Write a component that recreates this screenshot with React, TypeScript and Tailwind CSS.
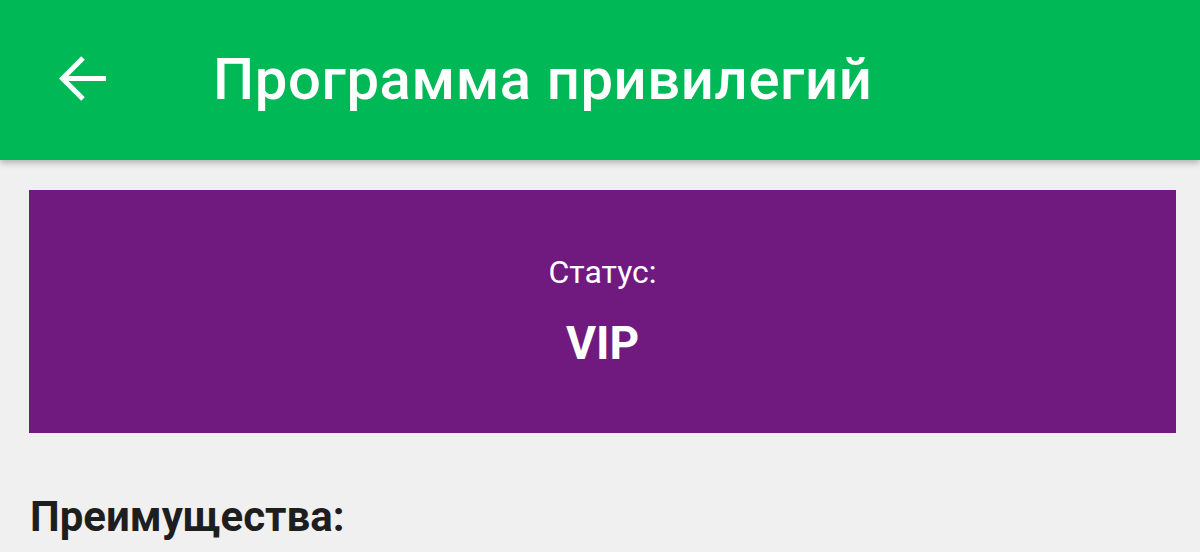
export default function App() {
  return (
    <div className="w-[1200px] h-[552px] overflow-hidden bg-[#f0f0f0] font-['Roboto',sans-serif]">
      {/* App bar */}
      <header className="relative z-10 h-[160px] bg-[#00b956] flex items-center shadow-[0_3px_6px_rgba(0,0,0,0.25)]">
        <button className="ml-[59px] w-[47px] h-[47px] -mt-[4px] text-white">
          <svg viewBox="0 0 47 47" width="47" height="47" fill="none" stroke="currentColor" strokeWidth="5">
            <path d="M3 23.5H47" />
            <path d="M24 3L3.5 23.5L24 44" />
          </svg>
        </button>
        <h1 className="ml-[107px] text-[58px] leading-none font-medium text-white tracking-[0.6px] -mt-[2px]">
          Программа привилегий
        </h1>
      </header>

      <main className="pl-[29px] pr-[24px] pt-[30px]">
        {/* Status card */}
        <section className="h-[243px] bg-[#701a80] flex flex-col items-center text-white">
          <div className="mt-[66px] text-[32px] leading-none">Статус:</div>
          <div className="mt-[32px] text-[46px] leading-none font-bold">VIP</div>
        </section>

        <h2 className="mt-[63px] text-[42px] leading-none font-bold text-[#1e1e1e] pl-[1px]">
          Преимущества:
        </h2>
      </main>
    </div>
  )
}
